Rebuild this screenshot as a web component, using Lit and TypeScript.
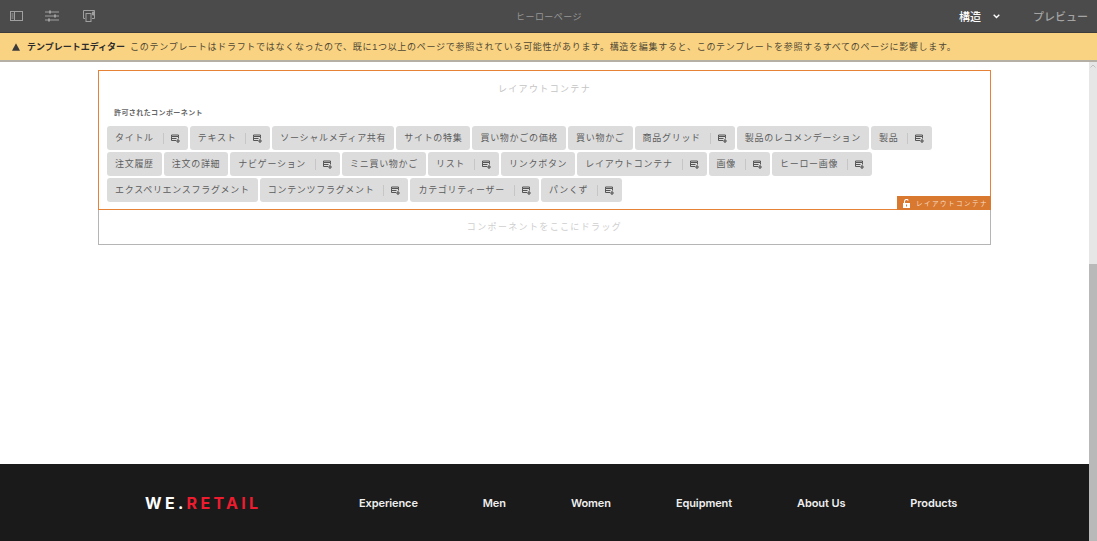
import { LitElement, html, css, svg } from 'lit';
import { customElement } from 'lit/decorators.js';

const COMPONENTS: [string, boolean][] = [
  ['タイトル', true], ['テキスト', true], ['ソーシャルメディア共有', false], ['サイトの特集', false],
  ['買い物かごの価格', false], ['買い物かご', false], ['商品グリッド', true],
  ['製品のレコメンデーション', false], ['製品', true], ['注文履歴', false], ['注文の詳細', false],
  ['ナビゲーション', true], ['ミニ買い物かご', false], ['リスト', true], ['リンクボタン', false],
  ['レイアウトコンテナ', true], ['画像', true], ['ヒーロー画像', true],
  ['エクスペリエンスフラグメント', false], ['コンテンツフラグメント', true],
  ['カテゴリティーザー', true], ['パンくず', true],
];

const NAV = ['Experience', 'Men', 'Women', 'Equipment', 'About Us', 'Products'];

const chipIcon = svg`<svg class="chip-icon" width="9" height="9" viewBox="0 0 9 9">
  <path d="M0.5 1h7v1.5h-7zM0.5 2.5v4h4.5M7.5 2.5v2M0.5 4.5h5" fill="none" stroke="#555" stroke-width="1"/>
  <path d="M7 5v4M5 7h4" stroke="#555" stroke-width="1.2"/>
</svg>`;

@customElement('app-root')
export class AppRoot extends LitElement {
  static styles = css`
    :host {
      display: flex;
      flex-direction: column;
      height: 541px;
      overflow: hidden;
      background: #fff;
      font-family: 'Liberation Sans', 'Noto Sans CJK JP', sans-serif;
    }

    /* top toolbar */
    .toolbar {
      height: 32px;
      flex: none;
      display: grid;
      grid-template-columns: 1fr auto 1fr;
      align-items: center;
      padding: 0 9px 0 10px;
      background: #4b4b4b;
      border-bottom: 1px solid #3c3c3c;
    }
    .tools {
      display: flex;
      align-items: center;
      gap: 22px;
    }
    .tools svg { display: block; }
    .tools svg:last-child { margin-left: 2px; }
    .page-title {
      font-size: 9px;
      letter-spacing: 0.45px;
      color: #979797;
    }
    .modes {
      display: flex;
      align-items: center;
      justify-content: flex-end;
      font-size: 11px;
    }
    .mode {
      color: #fff;
      font-weight: 500;
    }
    .chevron { margin: 0 0 0 12px; }
    .preview {
      margin-left: 33px;
      color: #a4a4a4;
      font-weight: 500;
    }

    /* warning banner */
    .banner {
      height: 29px;
      flex: none;
      display: flex;
      align-items: center;
      padding: 0 0 0 12px;
      box-sizing: border-box;
      background: #fad382;
      border-bottom: 2px solid #b4b0a6;
      font-size: 9px;
      letter-spacing: 0.71px;
      color: #4f4834;
      white-space: nowrap;
    }
    .banner svg { margin-right: 7px; flex: none; }
    .banner b {
      color: #2c2c2c;
      margin-right: 5px;
      letter-spacing: 0;
    }

    /* page area */
    .body {
      flex: 1;
      min-height: 0;
      display: flex;
    }
    .page {
      flex: 1;
      display: flex;
      flex-direction: column;
    }
    .content {
      flex: 1;
      padding: 8px 98px 0;
    }
    .container {
      position: relative;
      height: 140px;
      box-sizing: border-box;
      border: 1px solid #e58236;
      padding: 12px 8px 0;
    }
    .container-title {
      text-align: center;
      font-size: 9px;
      letter-spacing: 1.35px;
      line-height: 12px;
      color: #c4c4c4;
    }
    .allowed {
      margin: 13px 0 0 7px;
      font-size: 7px;
      font-weight: 700;
      line-height: 10px;
      letter-spacing: 0.42px;
      color: #666;
    }
    .chips {
      display: flex;
      flex-wrap: wrap;
      gap: 2px;
      margin-top: 8px;
    }
    .chip {
      height: 24px;
      box-sizing: border-box;
      display: flex;
      align-items: center;
      padding: 0 8px;
      background: #dcdcdc;
      border-radius: 3px;
      font-size: 9px;
      letter-spacing: 0.7px;
      color: #5c5c5c;
      white-space: nowrap;
    }
    .chip-label { padding-bottom: 2px; }
    .chip-sep {
      width: 1px;
      height: 11px;
      margin: 0 7px 0 9px;
      background: #c6c6c6;
    }
    .chip-icon { flex: none; }
    .tag {
      position: absolute;
      right: -1px;
      bottom: -1px;
      width: 94px;
      height: 14px;
      box-sizing: border-box;
      display: flex;
      align-items: center;
      padding-left: 6px;
      gap: 6px;
      background: #d9782f;
      font-size: 6.5px;
      letter-spacing: 1.5px;
      color: #f6dcc6;
      white-space: nowrap;
    }
    .dropzone {
      height: 35px;
      box-sizing: border-box;
      display: flex;
      align-items: center;
      justify-content: center;
      border: 1px solid #b5b5b5;
      border-top: 0;
      font-size: 9px;
      letter-spacing: 1.35px;
      color: #cfcfcf;
      padding-bottom: 2px;
    }

    /* site footer */
    .footer {
      height: 77px;
      flex: none;
      display: flex;
      align-items: center;
      padding: 0 0 0 145px;
      background: #1a1a1a;
    }
    .logo {
      width: 214px;
      flex: none;
      font-size: 16px;
      font-weight: 700;
      letter-spacing: 3.3px;
      color: #fff;
      font-family: Inter, 'Liberation Sans', sans-serif;
    }
    .logo span { color: #ed1c2e; }
    .nav {
      display: flex;
      gap: 65px;
      font-family: Inter, 'Liberation Sans', sans-serif;
      font-size: 11px;
      font-weight: 600;
      letter-spacing: -0.1px;
      color: #efefef;
    }

    /* scrollbar */
    .scrollbar {
      width: 8px;
      flex: none;
      display: flex;
      flex-direction: column;
      background: #e6e6e6;
    }
    .scrollbar-top {
      height: 202px;
      display: flex;
      justify-content: center;
      padding-top: 2px;
      box-sizing: border-box;
    }
    .thumb {
      flex: 1;
      background: #b9b9b9;
    }
  `;

  render() {
    return html`
      <div class="toolbar">
        <div class="tools">
          <svg width="13" height="10" viewBox="0 0 13 10" fill="none" stroke="#a0a0a0">
            <rect x="0.5" y="0.5" width="12" height="9"/>
            <path d="M4.5 0.5v9M1.5 3h2M1.5 5h2M1.5 7h2"/>
          </svg>
          <svg width="14" height="12" viewBox="0 0 14 12" fill="none" stroke="#a0a0a0">
            <path d="M0 2h14M0 6h14M0 10h14"/>
            <path d="M5 0.5v3M10 4.5v3M4 8.5v3" stroke-width="2"/>
          </svg>
          <svg width="12" height="12" viewBox="0 0 12 12" fill="none" stroke="#a0a0a0">
            <path d="M2 8.5H0.5v-8h11v8H9"/>
            <rect x="3" y="3.5" width="5" height="8"/>
            <path d="M9.5 2h1.5v3h-1.5z" fill="#a0a0a0"/>
          </svg>
        </div>
        <div class="page-title">ヒーローページ</div>
        <div class="modes">
          <span class="mode">構造</span>
          <svg class="chevron" width="7" height="5" viewBox="0 0 7 5" fill="none" stroke="#fff" stroke-width="1.4">
            <path d="M0.7 0.8l2.8 2.8 2.8-2.8"/>
          </svg>
          <span class="preview">プレビュー</span>
        </div>
      </div>

      <div class="banner">
        <svg width="8" height="8" viewBox="0 0 8 8">
          <path d="M4 0.2L8 7.8H0z" fill="#3a3a3a"/>
        </svg>
        <b>テンプレートエディター</b>
        <span>このテンプレートはドラフトではなくなったので、既に1つ以上のページで参照されている可能性があります。構造を編集すると、このテンプレートを参照するすべてのページに影響します。</span>
      </div>

      <div class="body">
        <div class="page">
          <div class="content">
            <div class="container">
              <div class="container-title">レイアウトコンテナ</div>
              <div class="allowed">許可されたコンポーネント</div>
              <div class="chips">
                ${COMPONENTS.map(([label, hasIcon]) => html`
                  <div class="chip">
                    <span class="chip-label">${label}</span>
                    ${hasIcon ? html`<span class="chip-sep"></span>${chipIcon}` : ''}
                  </div>
                `)}
              </div>
              <div class="tag">
                <svg width="7" height="9" viewBox="0 0 7 9">
                  <path d="M1.5 4V2.2a2 2 0 0 1 3.8-.6" fill="none" stroke="#fff" stroke-width="1.1"/>
                  <rect x="0" y="4" width="7" height="5" fill="#fff"/>
                  <rect x="3" y="5.5" width="1" height="2" fill="#d9782f"/>
                </svg>
                <span>レイアウトコンテナ</span>
              </div>
            </div>
            <div class="dropzone">コンポーネントをここにドラッグ</div>
          </div>
          <div class="footer">
            <div class="logo">WE.<span>RETAIL</span></div>
            <div class="nav">${NAV.map((item) => html`<span>${item}</span>`)}</div>
          </div>
        </div>
        <div class="scrollbar">
          <div class="scrollbar-top">
            <svg width="6" height="4" viewBox="0 0 6 4" fill="none" stroke="#c2c2c2">
              <path d="M0.5 3.5L3 1l2.5 2.5"/>
            </svg>
          </div>
          <div class="thumb"></div>
        </div>
      </div>
    `;
  }
}
